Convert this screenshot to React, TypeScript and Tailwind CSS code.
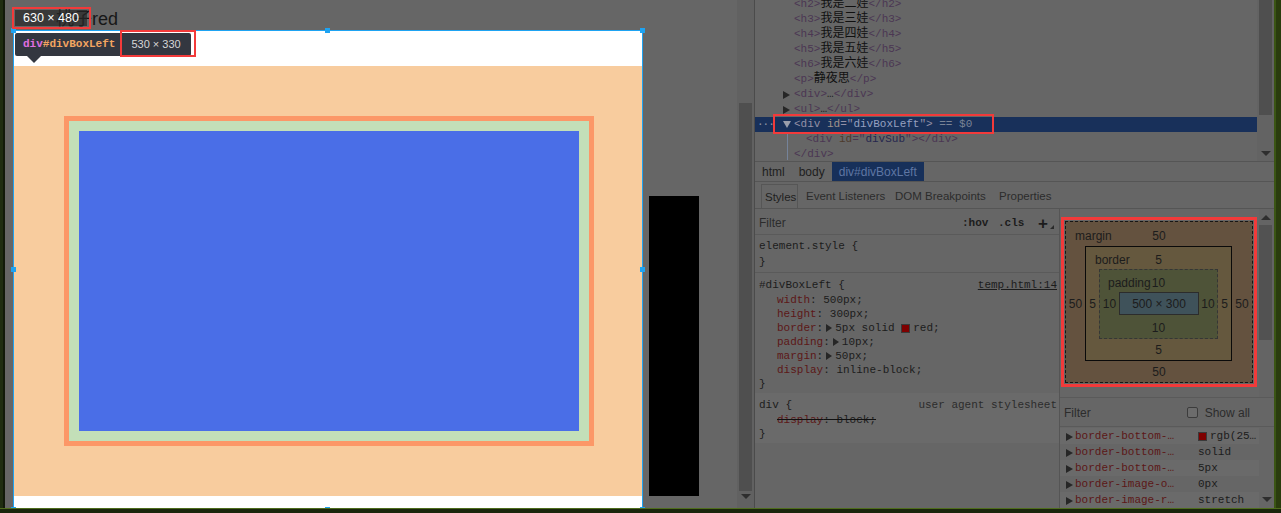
import React from 'react';

const MONO = "font-[family-name:'Liberation_Mono','Noto_Sans_CJK_SC',monospace]";
const SANS = "font-[family-name:'Liberation_Sans','Noto_Sans_CJK_SC',sans-serif]";

const Caret = ({ open = false, light = false }: { open?: boolean; light?: boolean }) =>
  open ? (
    <span className={`inline-block w-0 h-0 border-x-[4px] border-x-transparent border-t-[7px] ${light ? 'border-t-[#9a9eab]' : 'border-t-[#262626]'}`} />
  ) : (
    <span className={`inline-block w-0 h-0 border-y-[4px] border-y-transparent border-l-[7px] ${light ? 'border-l-[#9a9eab]' : 'border-l-[#262626]'}`} />
  );

const SmallCaret = () => (
  <span className="inline-block w-0 h-0 border-y-[4px] border-y-transparent border-l-[6px] border-l-[#262626] mx-[3px]" />
);

const Tag = ({ children }: { children: React.ReactNode }) => <span className="text-[#4b3653]">{children}</span>;

const headings = [
  ['h2', '我是二娃'],
  ['h3', '我是三娃'],
  ['h4', '我是四娃'],
  ['h5', '我是五娃'],
  ['h6', '我是六娃'],
  ['p', '静夜思'],
];

function ElementsTree() {
  return (
    <div className={`flex-1 -mt-[3px] text-[11px] ${MONO}`}>
      {headings.map(([t, txt]) => (
        <div key={t} className="h-[15px] leading-[15px] pl-[39px] whitespace-nowrap">
          <Tag>&lt;{t}&gt;</Tag>
          <span className="text-[12px] text-[#101010]">{txt}</span>
          <Tag>&lt;/{t}&gt;</Tag>
        </div>
      ))}
      {['div', 'ul'].map((t) => (
        <div key={t} className="h-[15px] leading-[15px] pl-[28px] flex items-center whitespace-nowrap">
          <span className="w-[11px] flex items-center">
            <Caret />
          </span>
          <Tag>&lt;{t}&gt;</Tag>
          <span className="text-[#1a1a1a]">…</span>
          <Tag>&lt;/{t}&gt;</Tag>
        </div>
      ))}
      <div className="h-[15px] leading-[15px] bg-[#18305a] flex items-center whitespace-pre">
        <span className="w-[28px] pl-[2px] text-[#8f96a8] tracking-[-1px]">···</span>
        <span className="w-[11px] flex items-center">
          <Caret open light />
        </span>
        <span className="text-[#9490a6]">{'<div '}</span>
        <span className="text-[#a0928a]">id</span>
        <span className="text-[#9490a6]">="</span>
        <span className="text-[#96a0c0]">divBoxLeft</span>
        <span className="text-[#9490a6]">"&gt;</span>
        <span className="text-[#7a8496]">{' == $0'}</span>
      </div>
      <div className="h-[15px] leading-[15px] ml-[32px] border-l border-[#75839a] pl-[18px] whitespace-pre">
        <Tag>{'<div '}</Tag>
        <span className="text-[#4d3a2c]">id</span>
        <Tag>="</Tag>
        <span className="text-[#26264e]">divSub</span>
        <Tag>"&gt;&lt;/div&gt;</Tag>
      </div>
      <div className="h-[13px] leading-[15px] ml-[32px] border-l border-[#75839a] pl-[6px] whitespace-nowrap">
        <Tag>&lt;/div&gt;</Tag>
      </div>
    </div>
  );
}

function BoxModel() {
  return (
    <div className={`text-[12px] text-[#1c1c1c] ${SANS}`}>
      <div className="border-[3px] border-[#f23a3a] p-[1px] w-[196px] h-[170px]">
        <div className="w-full h-full bg-[#64523f] border border-dashed border-[#161616] flex flex-col">
          <div className="h-[24px] relative flex items-center justify-center pt-[4px]">
            <span className="absolute left-[9px]">margin</span>
            <span>50</span>
          </div>
          <div className="flex">
            <div className="w-[19px] flex items-center justify-center">50</div>
            <div className="w-[147px] h-[115px] bg-[#65583e] border border-[#0a0a0a] flex flex-col">
              <div className="h-[22px] relative flex items-center justify-center pt-[3px]">
                <span className="absolute left-[9px]">border</span>
                <span>5</span>
              </div>
              <div className="flex">
                <div className="w-[13px] flex items-center justify-center">5</div>
                <div className="w-[119px] h-[70px] bg-[#4e5338] border border-dashed border-[#363636] flex flex-col">
                  <div className="h-[22px] relative flex items-center justify-center pt-[3px]">
                    <span className="absolute left-[8px]">padding</span>
                    <span>10</span>
                  </div>
                  <div className="flex">
                    <div className="w-[19px] flex items-center justify-center">10</div>
                    <div className="w-[80px] h-[23px] bg-[#3f525a] border border-[#2c2c2c] flex items-center justify-center pt-[1px]">
                      500 × 300
                    </div>
                    <div className="flex-1 flex items-center justify-center">10</div>
                  </div>
                  <div className="flex-1 flex items-center justify-center pt-[2px]">10</div>
                </div>
                <div className="flex-1 flex items-center justify-center">5</div>
              </div>
              <div className="flex-1 flex items-center justify-center pt-[1px]">5</div>
            </div>
            <div className="flex-1 flex items-center justify-center">50</div>
          </div>
          <div className="flex-1 flex items-center justify-center pt-[1px]">50</div>
        </div>
      </div>
    </div>
  );
}

const computed = [
  ['border-bottom-…', 'rgb(25…', true],
  ['border-bottom-…', 'solid', false],
  ['border-bottom-…', '5px', false],
  ['border-image-o…', '0px', false],
  ['border-image-r…', 'stretch', false],
] as const;

function DevTools() {
  return (
    <div className="w-[519px] bg-[#666] flex flex-col">
      {/* elements tree */}
      <div className="h-[163px] flex overflow-hidden">
        <ElementsTree />
        <div className="w-[17px] bg-[#636363] flex flex-col">
          <div className="ml-[2px] w-[13px] h-[115px] bg-[#4f4f4f]" />
          <div className="mt-auto mb-[5px] flex justify-center">
            <span className="w-0 h-0 border-x-[5px] border-x-transparent border-t-[5px] border-t-[#2e2e2e]" />
          </div>
        </div>
      </div>

      {/* breadcrumb */}
      <div className={`h-[21px] border-t border-[#555] flex items-stretch text-[12px] text-[#1e1e1e] ${SANS}`}>
        <span className="px-[7px] flex items-center pt-[1px]">html</span>
        <span className="px-[7px] flex items-center pt-[1px]">body</span>
        <span className="px-[7px] flex items-center pt-[1px] bg-[#17305a] text-[#5f76a3]">div#divBoxLeft</span>
      </div>

      {/* tabs */}
      <div className={`h-[28px] border-t border-b border-[#555] flex items-end text-[11.5px] text-[#2c2c2c] ${SANS}`}>
        <span className="ml-[6px] h-[24px] border border-b-0 border-[#565656] px-[3px] pt-[2px] flex items-center text-[#1f1f1f] w-[37px]">Styles</span>
        <span className="ml-[8px] w-[89px] h-[24px] pt-[2px] flex items-center">Event Listeners</span>
        <span className="w-[104px] h-[24px] pt-[2px] flex items-center">DOM Breakpoints</span>
        <span className="h-[24px] pt-[2px] flex items-center">Properties</span>
      </div>

      <div className="flex-1 flex">
        {/* styles pane */}
        <div className="w-[305px] border-r border-[#555] flex flex-col">
          <div className={`h-[26px] border-b border-[#5a5a5a] flex items-center pt-[3px] ${SANS}`}>
            <span className="pl-[4px] text-[12px] text-[#2c2c2c]">Filter</span>
            <span className="flex-1" />
            <span className={`w-[36px] text-[11px] font-bold text-[#1c1c1c] ${MONO}`}>:hov</span>
            <span className={`w-[40px] text-[11px] font-bold text-[#1c1c1c] ${MONO}`}>.cls</span>
            <span className="w-[12px] text-[17px] leading-[17px] text-[#1c1c1c] font-bold">+</span>
            <span className="self-end mb-[5px] w-0 h-0 border-l-[4px] border-l-transparent border-b-[4px] border-b-[#2a2a2a]" />
            <span className="w-[5px]" />
          </div>
          <div className={`border-b border-[#5a5a5a] pt-[4px] pb-[1px] text-[11px] text-[#1c1c1c] ${MONO}`}>
            <div className="h-[15px] leading-[15px] pl-[4px]">element.style {'{'}</div>
            <div className="h-[17px] leading-[17px] pl-[4px]">{'}'}</div>
          </div>
          <div className={`pt-[5px] pb-[2px] text-[11px] text-[#1c1c1c] ${MONO}`}>
            <div className="h-[15px] leading-[15px] pl-[4px] pr-[2px] flex">
              <span>#divBoxLeft {'{'}</span>
              <span className="ml-auto underline">temp.html:14</span>
            </div>
            <div className="h-[14px] leading-[14px] pl-[22px]">
              <span className="text-[#5c1717]">width</span>: 500px;
            </div>
            <div className="h-[14px] leading-[14px] pl-[22px]">
              <span className="text-[#5c1717]">height</span>: 300px;
            </div>
            <div className="h-[14px] leading-[14px] pl-[22px] flex items-center whitespace-pre">
              <span className="text-[#5c1717]">border</span>:<SmallCaret />
              <span>5px solid </span>
              <span className="w-[9px] h-[9px] bg-[#7e0000] border border-[#3a3a3a] mr-[3px]" />
              <span>red;</span>
            </div>
            <div className="h-[14px] leading-[14px] pl-[22px] flex items-center whitespace-pre">
              <span className="text-[#5c1717]">padding</span>:<SmallCaret />
              <span>10px;</span>
            </div>
            <div className="h-[14px] leading-[14px] pl-[22px] flex items-center whitespace-pre">
              <span className="text-[#5c1717]">margin</span>:<SmallCaret />
              <span>50px;</span>
            </div>
            <div className="h-[14px] leading-[14px] pl-[22px]">
              <span className="text-[#5c1717]">display</span>: inline-block;
            </div>
            <div className="h-[14px] leading-[14px] pl-[4px]">{'}'}</div>
          </div>
          <div className={`bg-[#6a6a6a] pt-[5px] pb-[2px] text-[11px] text-[#1c1c1c] ${MONO}`}>
            <div className="h-[15px] leading-[15px] pl-[4px] pr-[2px] flex">
              <span>div {'{'}</span>
              <span className="ml-auto text-[#2c2c2c]">user agent stylesheet</span>
            </div>
            <div className="h-[14px] leading-[14px] pl-[22px]">
              <span className="line-through decoration-[#111]">
                <span className="text-[#5c1717]">display</span>: block;
              </span>
            </div>
            <div className="h-[14px] leading-[14px] pl-[4px]">{'}'}</div>
          </div>
        </div>

        {/* right pane */}
        <div className="flex-1 flex flex-col">
          <div className="h-[188px] flex">
            <div className="flex-1 pl-[1px] pt-[8px]">
              <BoxModel />
            </div>
            <div className="w-[15px] bg-[#646464] flex flex-col items-start">
              <div className="h-[16px] w-[13px] flex items-center justify-center">
                <span className="w-0 h-0 border-x-[5px] border-x-transparent border-b-[5px] border-b-[#2e2e2e]" />
              </div>
              <div className="w-[13px] h-[115px] bg-[#525252]" />
            </div>
          </div>
          <div className={`h-[30px] border-t border-b border-[#5a5a5a] flex items-center pt-[1px] text-[12px] text-[#2c2c2c] ${SANS}`}>
            <span className="pl-[4px]">Filter</span>
            <span className="ml-auto w-[11px] h-[11px] border border-[#3c3c3c] rounded-[2px] bg-[#6c6c6c]" />
            <span className="ml-[7px] pr-[24px]">Show all</span>
          </div>
          <div className="flex-1 flex">
            <div className={`flex-1 pt-[1px] text-[11px] ${MONO}`}>
              {computed.map(([n, v, sw], i) => (
                <div key={i} className={`h-[16px] pt-[1px] flex items-center ${i % 2 === 0 ? 'bg-[#6a6a6a]' : ''}`}>
                  <span className="w-[15px] pl-[6px] flex items-center">
                    <Caret />
                  </span>
                  <span className="w-[123px] text-[#5c1717] whitespace-nowrap">{n}</span>
                  {sw && <span className="w-[9px] h-[9px] bg-[#7e0000] border border-[#3a3a3a] mr-[3px]" />}
                  <span className="text-[#1c1c1c]">{v}</span>
                </div>
              ))}
            </div>
            <div className="w-[15px] flex flex-col justify-end items-center pb-[6px]">
              <span className="w-0 h-0 border-x-[5px] border-x-transparent border-t-[5px] border-t-[#2e2e2e]" />
            </div>
          </div>
        </div>
      </div>

      {/* annotation around selected node */}
      <div className="absolute left-[773px] top-[114px] w-[221px] h-[20px] border-2 border-[#f23a3a]" />
    </div>
  );
}

const Handle = ({ x, y }: { x: number; y: number }) => (
  <div className="absolute w-[5px] h-[5px] bg-[#1ea3f2]" style={{ left: x - 2, top: y - 2 }} />
);

function PageArea() {
  return (
    <div className="relative w-[732px] bg-[#666] overflow-hidden">
      <div className={`h-[30px] pl-[51px] pt-[8px] text-[18px] leading-[22px] text-[#171717] ${SANS}`}>桃子red</div>
      <div className="flex items-start pl-[8px]">
        <div className="w-[630px] h-[479px] border border-[#1ea3f2] bg-white pt-[35px]">
          <div className="h-[430px] bg-[#f8cc9e] pl-[50px] pt-[50px]">
            <div className="w-[530px] h-[330px] border-[5px] border-[#fc9767] bg-[#c3dfb8] p-[10px]">
              <div className="w-[500px] h-[300px] bg-[#4a6ee7]" />
            </div>
          </div>
        </div>
        <div className="ml-[6px] mt-[166px] w-[50px] h-[300px] bg-black" />
      </div>

      {[
        [8, 30], [322, 30], [637, 30], [8, 269], [637, 269], [8, 509], [322, 509], [637, 509],
      ].map(([x, y], i) => (
        <Handle key={i} x={x} y={y} />
      ))}

      {/* size badge */}
      <div className="absolute left-[7px] top-[7px] w-[79px] h-[22px] border-2 border-[#f23a3a] p-[1px]">
        <div className={`h-full w-[72px] bg-[#262626]/70 text-white text-[12.5px] leading-[16px] pl-[8px] ${SANS}`}>630 × 480</div>
      </div>

      {/* element tooltip */}
      <div className="absolute left-[10px] top-[33px] h-[23px] flex items-center bg-[#333740] rounded-[2px]">
        <span className={`pl-[8px] pr-[6px] text-[11px] font-bold ${MONO}`}>
          <span className="text-[#e06fe0]">div</span>
          <span className="text-[#f3a560]">#divBoxLeft</span>
        </span>
        <span className={`pl-[10px] pr-[10px] text-[11px] text-[#d6d6d6] ${SANS}`}>530 × 330</span>
      </div>
      <div className="absolute left-[22px] top-[56px] w-0 h-0 border-x-[7px] border-x-transparent border-t-[7px] border-t-[#333740]" />
      <div className="absolute left-[115px] top-[30px] w-[76px] h-[27px] border-2 border-[#f23a3a]" />
    </div>
  );
}

export default function App() {
  return (
    <div className="relative w-[1281px] h-[513px] overflow-hidden bg-[#1b280d] flex flex-col">
      <div className="flex h-[508px]">
        <div className="w-[5px] bg-[#1f2d11] border-r-2 border-[#121a0a]" />
        <PageArea />
        <div className="w-[17px] bg-[#616161] flex flex-col">
          <div className="mt-[103px] ml-[2px] w-[13px] h-[388px] bg-[#4f4f4f]" />
          <div className="mt-auto mb-[9px] flex justify-center">
            <span className="w-0 h-0 border-x-[5px] border-x-transparent border-t-[5px] border-t-[#2e2e2e]" />
          </div>
        </div>
        <div className="w-px bg-[#4b4b4b]" />
        <DevTools />
        <div className="w-[7px] bg-[#2a3c0e] border-l-2 border-[#3b5514]" />
      </div>
      <div className="h-px bg-[#4e6c1c]" />
      <div className="flex-1 bg-[#1a260c]" />
    </div>
  );
}
